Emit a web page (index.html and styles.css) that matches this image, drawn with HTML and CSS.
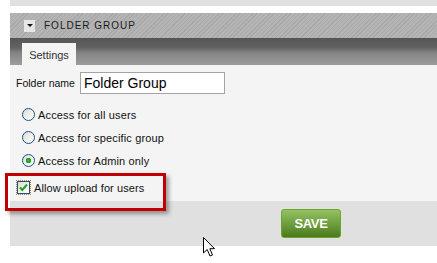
FILE: index.html
```html
<!DOCTYPE html>
<html lang="en">
<head>
    <meta charset="UTF-8">
    <title>Folder Group</title>
    <link rel="stylesheet" href="styles.css">
</head>
<body>
    <div class="page">
        <div class="prev-panel"></div>

        <div class="panel">
            <div class="panel-head">
                <span class="toggle"><span class="arrow"></span></span>
                <span class="panel-title">FOLDER GROUP</span>
            </div>
            <div class="tabs">
                <div class="tab">Settings</div>
            </div>
            <div class="panel-body">
                <div class="field">
                    <label for="folder-name">Folder name</label>
                    <input type="text" id="folder-name" value="Folder Group">
                </div>
                <div class="options">
                    <label class="option"><input type="radio" name="access"> Access for all users</label>
                    <label class="option"><input type="radio" name="access"> Access for specific group</label>
                    <label class="option"><input type="radio" name="access" checked> Access for Admin only</label>
                </div>
                <div class="check-row">
                    <span class="checkbox">
                        <svg width="11" height="11" viewBox="0 0 11 11">
                            <path d="M2 5.5 L4.3 8 L9 2.5" fill="none" stroke="#21a121" stroke-width="2"/>
                        </svg>
                    </span>
                    <span>Allow upload for users</span>
                </div>
            </div>
            <div class="panel-foot">
                <button class="save">SAVE</button>
            </div>
        </div>
    </div>

    <!-- annotation + mouse pointer on top of the screenshot -->
    <div class="highlight"></div>
    <svg class="pointer" width="13" height="21" viewBox="0 0 13 21">
        <path d="M0.5 0.5 L0.5 16 L4.2 12.5 L7 19 L9.5 18 L6.8 11.7 L11.5 11.7 Z" fill="#fff" stroke="#000" stroke-width="1"/>
    </svg>
</body>
</html>
```

FILE: styles.css
```css
body {
    margin: 0;
    background: #fff;
    font-family: "Liberation Sans", Arial, sans-serif;
    font-size: 11px;
    color: #111;
}

.page {
    margin-left: 10px;
}

.prev-panel {
    height: 6px;
    background: #e0e0e0;
    margin-bottom: 7px;
}

/* header with hatch pattern */
.panel-head {
    height: 25px;
    display: flex;
    align-items: center;
    padding-left: 14px;
    background: repeating-linear-gradient(-45deg, #a9a9a9 0, #a9a9a9 1px, #b4b4b4 1px, #b4b4b4 3px);
}

.toggle {
    width: 11px;
    height: 12px;
    background: #e6e6e6;
    display: flex;
    align-items: center;
    justify-content: center;
}

.arrow {
    width: 0;
    height: 0;
    border-left: 3px solid transparent;
    border-right: 3px solid transparent;
    border-top: 3px solid #111;
}

.panel-title {
    margin-left: 9px;
    font-size: 10px;
    letter-spacing: 1px;
    color: #1a1a1a;
}

.tabs {
    height: 27px;
    display: flex;
    align-items: flex-end;
    padding-left: 12px;
    background: linear-gradient(#555, #626262 35%, #848484 55%, #9c9c9c);
}

.tab {
    width: 54px;
    height: 22px;
    background: #f4f4f4;
    color: #333;
    font-size: 11px;
    text-align: center;
    line-height: 24px;
}

.panel-body {
    background: #f4f4f4;
    padding: 7px 0 0 6px;
    height: 129px;
}

.field {
    display: flex;
    align-items: center;
}

.field label {
    width: 64px;
    font-size: 10.5px;
}

.field input {
    width: 145px;
    height: 22px;
    box-sizing: border-box;
    border: 1px solid #a3a3a3;
    background: #fff;
    padding: 0 3px;
    font-family: "Liberation Sans", Arial, sans-serif;
    font-size: 14px;
    color: #000;
    outline: none;
}

.options {
    margin-top: 9px;
}

.option {
    display: flex;
    align-items: center;
    height: 23px;
    letter-spacing: 0.15px;
}

.option input {
    appearance: none;
    width: 13px;
    height: 13px;
    margin: 0 3px 0 6px;
    border: 1px solid #1c5180;
    border-radius: 50%;
    background: linear-gradient(135deg, #dcdcd6, #fff);
}

.option input:checked {
    background: radial-gradient(circle, #2fc42f 0, #1a9a1a 2.5px, transparent 3px), linear-gradient(135deg, #dcdcd6, #fff);
}

.check-row {
    display: flex;
    align-items: center;
    margin-top: 9px;
    letter-spacing: 0.1px;
}

.checkbox {
    width: 11px;
    height: 11px;
    border: 1px solid #1c5180;
    outline: 1px dotted #c07a30;
    background: linear-gradient(135deg, #dcdcd6, #fff);
    margin: 0 4px 0 1px;
    display: flex;
}

.panel-foot {
    height: 45px;
    background: #e0e0e0;
    padding: 8px 0 0 271px;
    box-sizing: border-box;
}

.save {
    width: 60px;
    height: 29px;
    border: 1px solid #6fa32e;
    border-radius: 3px;
    background: linear-gradient(#93c264, #6f9f3e 50%, #4a7a1c);
    color: #fff;
    font-family: "Liberation Sans", Arial, sans-serif;
    font-weight: bold;
    font-size: 13px;
    letter-spacing: -0.3px;
    padding: 0;
}

/* red annotation box drawn over the form */
.highlight {
    position: absolute;
    left: 5px;
    top: 173px;
    width: 155px;
    height: 32px;
    border: 3px solid #c00000;
    box-shadow: 3px 3px 4px rgba(0, 0, 0, 0.35);
}

.pointer {
    position: absolute;
    left: 203px;
    top: 237px;
}
```
